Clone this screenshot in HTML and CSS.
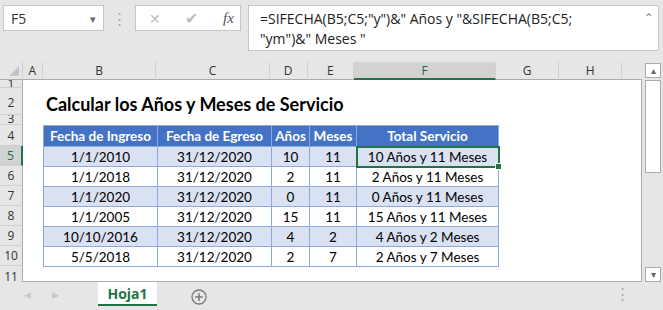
FILE: index.html
```html
<!DOCTYPE html>
<html lang="es">
<head>
    <meta charset="UTF-8">
    <title>Calcular los Años y Meses de Servicio</title>
    <link rel="stylesheet" href="styles.css">
</head>
<body>

    <div class="toolbar">
        <div class="namebox">
            <span>F5</span>
            <span class="drop">&#9662;</span>
        </div>
        <div class="grip">&#8942;</div>
        <div class="fxbox">
            <span class="fx-cancel">&#10005;</span>
            <span class="fx-ok">&#10004;</span>
            <span class="fx-label">fx</span>
        </div>
        <div class="formula">
            <div class="formula-text">=SIFECHA(B5;C5;"y")&amp;" Años y "&amp;SIFECHA(B5;C5;<br>"ym")&amp;" Meses "</div>
            <span class="caret">&#710;</span>
        </div>
    </div>

    <div class="main">
        <div class="sheet">
            <div class="colheads">
                <div class="colhead corner"></div>
                <div class="colhead col-a">A</div>
                <div class="colhead col-b">B</div>
                <div class="colhead col-c">C</div>
                <div class="colhead col-d">D</div>
                <div class="colhead col-e">E</div>
                <div class="colhead col-f active">F</div>
                <div class="colhead col-g">G</div>
                <div class="colhead col-h">H</div>
                <div class="colhead col-rest"></div>
            </div>
            <div class="body">
                <div class="rowheads">
                    <div class="rowhead r1">1</div>
                    <div class="rowhead r2">2</div>
                    <div class="rowhead r3">3</div>
                    <div class="rowhead r4">4</div>
                    <div class="rowhead active">5</div>
                    <div class="rowhead">6</div>
                    <div class="rowhead">7</div>
                    <div class="rowhead">8</div>
                    <div class="rowhead">9</div>
                    <div class="rowhead">10</div>
                    <div class="rowhead r11">11</div>
                </div>
                <div class="canvas">
                    <div class="spacer-r1"></div>
                    <h1 class="title">Calcular los Años y Meses de Servicio</h1>
                    <div class="spacer-r3"></div>
                    <table class="data">
                        <colgroup>
                            <col class="w-b"><col class="w-c"><col class="w-d"><col class="w-e"><col class="w-f">
                        </colgroup>
                        <thead>
                            <tr>
                                <th>Fecha de Ingreso</th>
                                <th>Fecha de Egreso</th>
                                <th>Años</th>
                                <th>Meses</th>
                                <th>Total Servicio</th>
                            </tr>
                        </thead>
                        <tbody>
                            <tr class="band">
                                <td>1/1/2010</td><td>31/12/2020</td><td>10</td><td>11</td>
                                <td class="selected">10 Años y 11 Meses</td>
                            </tr>
                            <tr>
                                <td>1/1/2018</td><td>31/12/2020</td><td>2</td><td>11</td><td>2 Años y 11 Meses</td>
                            </tr>
                            <tr class="band">
                                <td>1/1/2020</td><td>31/12/2020</td><td>0</td><td>11</td><td>0 Años y 11 Meses</td>
                            </tr>
                            <tr>
                                <td>1/1/2005</td><td>31/12/2020</td><td>15</td><td>11</td><td>15 Años y 11 Meses</td>
                            </tr>
                            <tr class="band">
                                <td>10/10/2016</td><td>31/12/2020</td><td>4</td><td>2</td><td>4 Años y 2 Meses</td>
                            </tr>
                            <tr>
                                <td>5/5/2018</td><td>31/12/2020</td><td>2</td><td>7</td><td>2 Años y 7 Meses</td>
                            </tr>
                        </tbody>
                    </table>
                </div>
            </div>
        </div>
        <div class="vscroll">
            <div class="sbtn">&#9652;</div>
            <div class="thumb"></div>
            <div class="track"></div>
            <div class="sbtn">&#9662;</div>
        </div>
    </div>

    <div class="tabs">
        <span class="nav">&#9664;</span>
        <span class="nav">&#9654;</span>
        <div class="tab">Hoja1</div>
        <div class="addsheet">
            <svg width="16" height="16" viewBox="0 0 16 16">
                <circle cx="8" cy="8" r="7" fill="none" stroke="#7a7a7a" stroke-width="1.3"/>
                <path d="M8 4.2v7.6M4.2 8h7.6" stroke="#7a7a7a" stroke-width="1.6"/>
            </svg>
        </div>
        <div class="tab-grip">&#8942;</div>
    </div>

</body>
</html>
```

FILE: styles.css
```css
body {
    margin: 0;
    width: 663px;
    height: 310px;
    overflow: hidden;
    background: #e6e6e6;
    font-family: "Open Sans", "Noto Sans", sans-serif;
    color: #222;
}

/* formula bar */
.toolbar {
    height: 62px;
    display: flex;
    align-items: flex-start;
    padding: 5px 0 0 3px;
    box-sizing: border-box;
}
.namebox {
    width: 101px;
    height: 26px;
    box-sizing: border-box;
    background: #fff;
    border: 1px solid #c6c6c6;
    display: flex;
    align-items: center;
    justify-content: space-between;
    padding: 0 7px 0 7px;
    font-size: 14px;
    color: #333;
}
.namebox .drop {
    font-size: 11px;
    color: #666;
}
.grip {
    width: 31px;
    text-align: center;
    color: #a6a6a6;
    font-size: 15px;
    line-height: 26px;
}
.fxbox {
    width: 106px;
    height: 26px;
    box-sizing: border-box;
    background: #fff;
    border: 1px solid #c6c6c6;
    display: flex;
    align-items: center;
    padding-left: 13px;
    color: #bdbdbd;
    font-size: 14px;
}
.fx-ok {
    margin-left: 24px;
    font-size: 16px;
}
.fx-label {
    margin-left: 25px;
    font-family: "Liberation Serif", serif;
    font-style: italic;
    color: #555;
    font-size: 15px;
}
.formula {
    margin-left: 7px;
    width: 411px;
    height: 46px;
    box-sizing: border-box;
    background: #fff;
    border: 1px solid #c6c6c6;
    display: flex;
    justify-content: space-between;
    padding: 3px 6px 0 11px;
}
.formula-text {
    font-size: 14px;
    line-height: 20px;
    color: #222;
}
.caret {
    font-size: 16px;
    color: #777;
    line-height: 22px;
}

/* sheet */
.main {
    display: flex;
    height: 220px;
}
.sheet {
    width: 642px;
}
.colheads {
    display: flex;
    height: 18px;
}
.colhead {
    box-sizing: border-box;
    border-right: 1px solid #d0d0d0;
    border-bottom: 1px solid #ababab;
    font-size: 12px;
    line-height: 17px;
    text-align: center;
    color: #333;
}
.corner {
    width: 23px;
    position: relative;
}
.corner::after {
    content: "";
    position: absolute;
    right: 3px;
    bottom: 3px;
    border-style: solid;
    border-width: 0 0 10px 10px;
    border-color: transparent transparent #c4c4c4 transparent;
}
.col-a { width: 20px; }
.col-b { width: 114px; }
.col-c { width: 114px; }
.col-d { width: 38px; }
.col-e { width: 47px; }
.col-f { width: 142px; }
.col-g { width: 64px; }
.col-h { width: 63px; }
.col-rest { width: 20px; border-right: none; }
.colhead.active {
    background: #d2d2d2;
    border-bottom: 2px solid #217346;
    color: #1e6b41;
}

.body {
    display: flex;
    height: 202px;
}
.rowheads {
    width: 23px;
    flex-shrink: 0;
}
.rowhead {
    height: 20px;
    box-sizing: border-box;
    border-bottom: 1px solid #d0d0d0;
    border-right: 1px solid #ababab;
    font-size: 12px;
    line-height: 20px;
    text-align: center;
    color: #333;
    overflow: hidden;
}
.rowhead.r1 { height: 8px; line-height: 8px; }
.rowhead.r2 { height: 27px; line-height: 30px; }
.rowhead.r3 { height: 10px; line-height: 8px; }
.rowhead.r4 { height: 21px; line-height: 22px; }
.rowhead.r11 { height: 16px; line-height: 22px; border-bottom: none; }
.rowhead.active {
    background: #d2d2d2;
    border-right: 2px solid #217346;
    color: #1e6b41;
}

.canvas {
    flex: 1;
    background: #fff;
    border-right: 1px solid #ababab;
    border-bottom: 1px solid #ababab;
    padding-left: 20px;
}
.spacer-r1 { height: 8px; }
.spacer-r3 { height: 10px; }
.title {
    margin: 0;
    height: 27px;
    line-height: 33px;
    padding-left: 3px;
    font-family: Lato, "Open Sans", sans-serif;
    font-size: 18px;
    font-weight: bold;
    color: #000;
}

.data {
    border-collapse: collapse;
    table-layout: fixed;
    width: 456px;
    font-family: Lato, "Open Sans", sans-serif;
    font-size: 13.5px;
    color: #000;
}
.w-b { width: 114px; }
.w-c { width: 114px; }
.w-d { width: 38px; }
.w-e { width: 47px; }
.w-f { width: 142px; }
.data th, .data td {
    border: 1px solid #8ea9db;
    padding: 0;
    text-align: center;
    white-space: nowrap;
}
.data th {
    height: 20px;
    background: #4472c4;
    color: #fff;
    font-weight: bold;
}
.data td {
    height: 19px;
}
.data tr.band td {
    background: #d9e1f2;
}
.data td.selected {
    position: relative;
    outline: 2px solid #217346;
    outline-offset: -1px;
}
.data td.selected::after {
    content: "";
    position: absolute;
    right: -4px;
    bottom: -4px;
    width: 5px;
    height: 5px;
    background: #217346;
    border: 1px solid #fff;
}

/* vertical scrollbar */
.vscroll {
    width: 16px;
    margin-left: 3px;
    display: flex;
    flex-direction: column;
    padding-top: 1px;
}
.sbtn {
    height: 15px;
    box-sizing: border-box;
    background: #fff;
    border: 1px solid #ababab;
    font-size: 10px;
    line-height: 13px;
    text-align: center;
    color: #666;
}
.thumb {
    margin-top: 2px;
    height: 93px;
    box-sizing: border-box;
    background: #fff;
    border: 1px solid #ababab;
}
.track {
    flex: 1;
}

/* sheet tabs */
.tabs {
    height: 28px;
    display: flex;
    align-items: flex-start;
}
.nav {
    width: 28px;
    text-align: center;
    color: #c8c8c8;
    font-size: 9px;
    line-height: 26px;
}
.nav:first-child {
    margin-left: 13px;
}
.tab {
    margin-left: 29px;
    width: 59px;
    height: 22px;
    background: #fff;
    border-bottom: 2px solid #217346;
    color: #217346;
    font-weight: bold;
    font-size: 14px;
    line-height: 24px;
    text-align: center;
}
.addsheet {
    margin-left: 34px;
    padding-top: 6px;
}
.tab-grip {
    margin-left: auto;
    margin-right: 33px;
    color: #a6a6a6;
    font-size: 15px;
    line-height: 22px;
}
```
